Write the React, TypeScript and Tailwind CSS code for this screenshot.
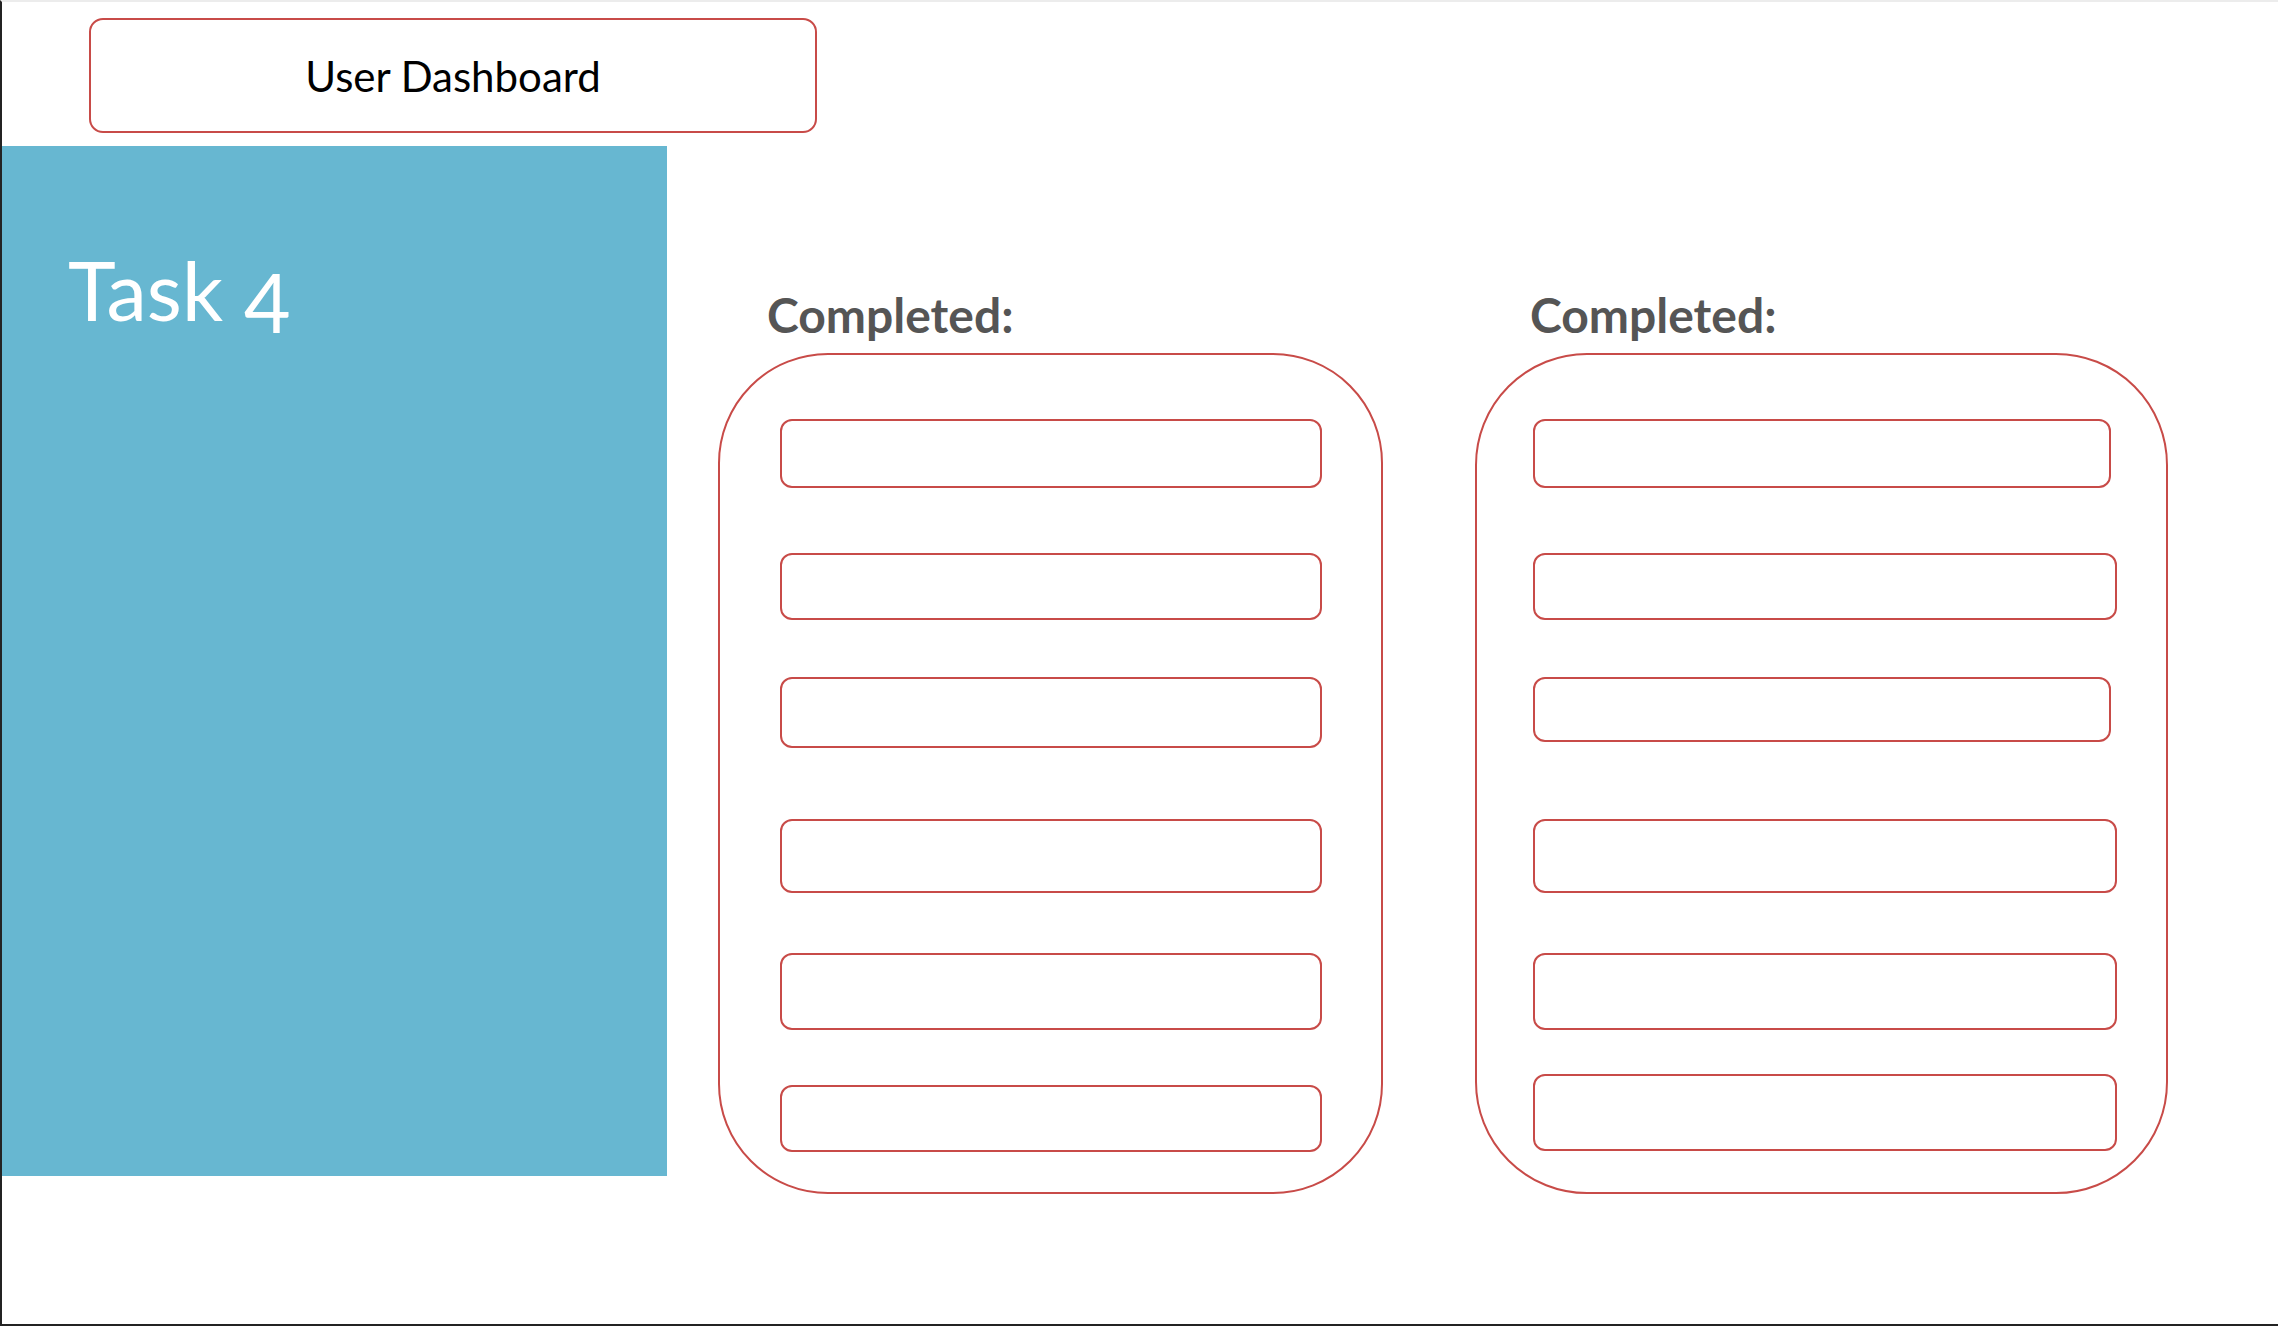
export default function App() {
  const leftRows = [
    'mt-[64px] h-[69px] w-[542px]',
    'mt-[65px] h-[67px] w-[542px]',
    'mt-[57px] h-[71px] w-[542px]',
    'mt-[71px] h-[74px] w-[542px]',
    'mt-[60px] h-[77px] w-[542px]',
    'mt-[55px] h-[67px] w-[542px]',
  ]

  const rightRows = [
    'mt-[64px] h-[69px] w-[578px]',
    'mt-[65px] h-[67px] w-[584px]',
    'mt-[57px] h-[65px] w-[578px]',
    'mt-[77px] h-[74px] w-[584px]',
    'mt-[60px] h-[77px] w-[584px]',
    'mt-[44px] h-[77px] w-[584px]',
  ]

  return (
    <div className="flex h-[1326px] w-full flex-col overflow-hidden border-t-2 border-b-2 border-l-2 border-t-[#ececec] border-b-[#232323] border-l-[#232323] bg-white font-['Lato',sans-serif]">
      {/* Header */}
      <div className="mt-[16px] ml-[87px] flex h-[115px] w-[728px] items-center justify-center rounded-[14px] border-2 border-[#c84b48] pt-[2px] text-[42px] text-black">
        User Dashboard
      </div>

      <div className="mt-[13px] flex items-start">
        {/* Sidebar */}
        <div className="h-[1030px] w-[665px] shrink-0 bg-[#67b7d1] pt-[103px] pl-[66px] text-[81px] leading-none text-white">
          Task <span className="relative top-[12px]">4</span>
        </div>

        {/* Column 1 */}
        <div className="mt-[145px] ml-[51px] w-[665px] shrink-0">
          <div className="ml-[49px] h-[48px] text-[48px] leading-none font-bold text-[#555555]">Completed:</div>
          <div className="mt-[14px] flex h-[841px] w-[665px] flex-col rounded-[110px] border-2 border-[#c84b48] pl-[60px]">
            {leftRows.map((cls, i) => (
              <div key={i} className={cls + ' shrink-0 rounded-[12px] border-2 border-[#c84b48]'} />
            ))}
          </div>
        </div>

        {/* Column 2 */}
        <div className="mt-[145px] ml-[92px] w-[693px] shrink-0">
          <div className="ml-[55px] h-[48px] text-[48px] leading-none font-bold text-[#555555]">Completed:</div>
          <div className="mt-[14px] flex h-[841px] w-[693px] flex-col rounded-[112px] border-2 border-[#c84b48] pl-[56px]">
            {rightRows.map((cls, i) => (
              <div key={i} className={cls + ' shrink-0 rounded-[12px] border-2 border-[#c84b48]'} />
            ))}
          </div>
        </div>
      </div>
    </div>
  )
}
